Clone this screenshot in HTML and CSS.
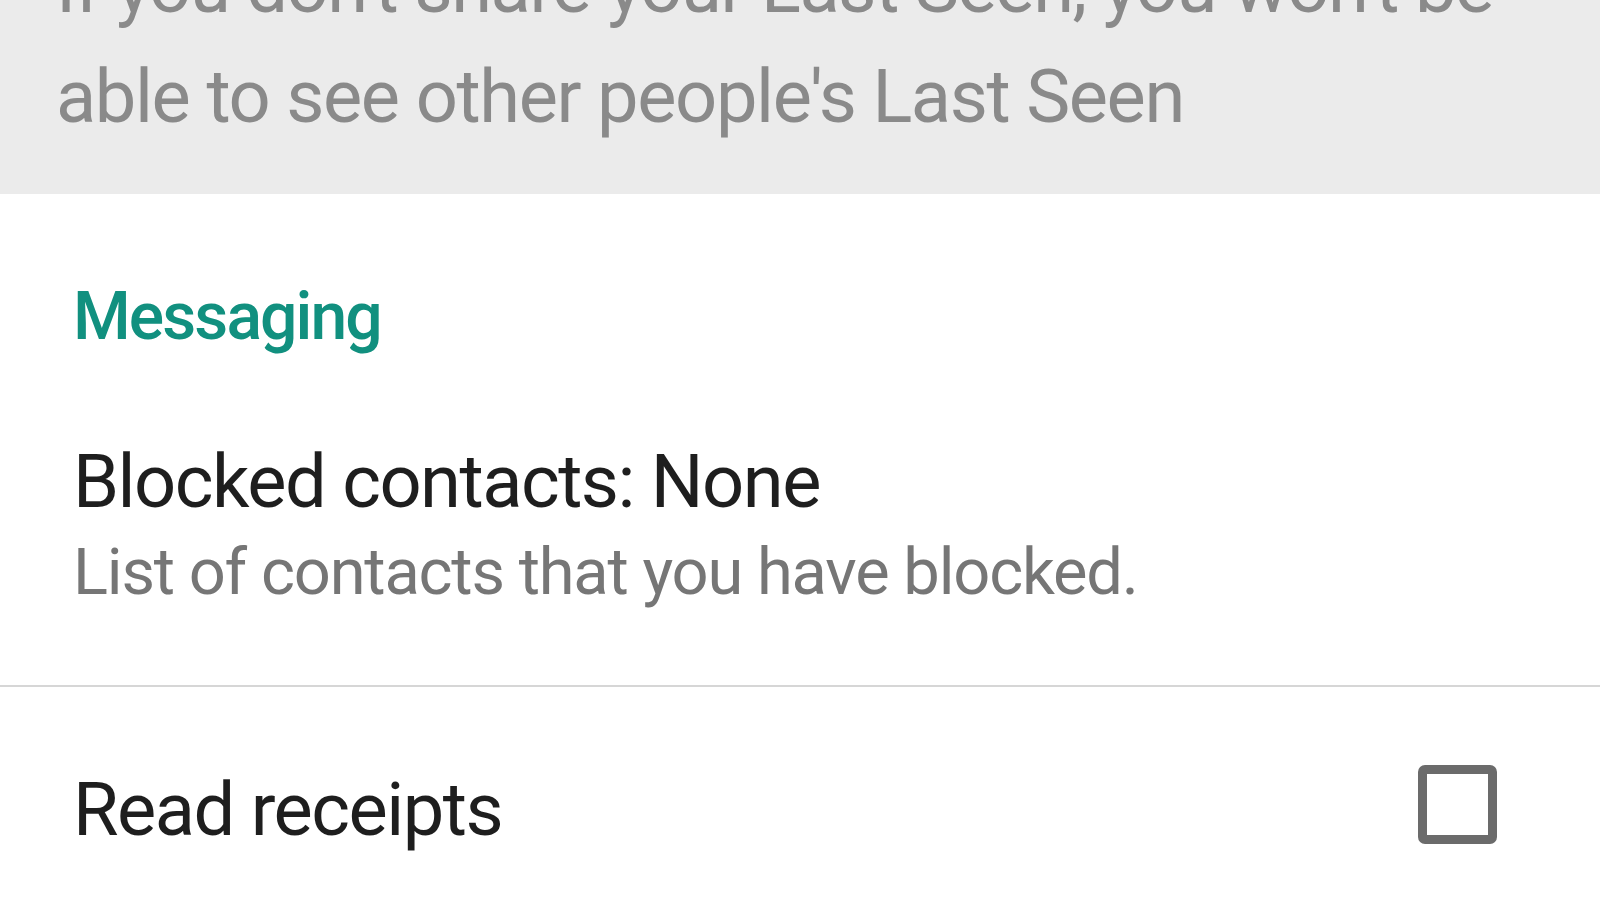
FILE: index.html
```html
<!DOCTYPE html>
<html lang="en">
<head>
<meta charset="utf-8">
<title>Privacy settings</title>
<link rel="stylesheet" href="styles.css">
</head>
<body>
<div class="screen">
  <div class="note">
    <p class="note-text">If you don't share your Last Seen, you won't be<br>able to see other people's Last Seen</p>
  </div>
  <section class="group">
    <h2 class="group-title">Messaging</h2>
    <div class="item item-divided">
      <div class="item-title">Blocked contacts: None</div>
      <div class="item-sub">List of contacts that you have blocked.</div>
    </div>
    <div class="item item-row">
      <div class="item-title">Read receipts</div>
      <span class="checkbox" role="checkbox" aria-checked="false"></span>
    </div>
  </section>
</div>
</body>
</html>
```

FILE: styles.css
```css
html, body {
  margin: 0;
  padding: 0;
  background: #ffffff;
}

body {
  font-family: Roboto, "Noto Sans", "Liberation Sans", sans-serif;
  width: 1600px;
  height: 900px;
  overflow: hidden;
}

.screen {
  display: flex;
  flex-direction: column;
}

.note {
  background: #ebebeb;
  margin-top: -68px;
  padding: 0 0 42px 56px;
}

.note-text {
  margin: 0;
  font-size: 74px;
  line-height: 110px;
  letter-spacing: -1.4px;
  color: #8a8a8a;
  white-space: nowrap;
}

.group {
  display: flex;
  flex-direction: column;
}

.group-title {
  margin: 83px 0 0 73px;
  font-size: 66px;
  line-height: 80px;
  font-weight: 500;
  letter-spacing: -1.9px;
  color: #11907f;
}

.item {
  padding-left: 73px;
}

.item-divided {
  margin-top: 81px;
  padding-bottom: 73px;
  border-bottom: 2px solid #d6d6d6;
}

.item-title {
  font-size: 74px;
  line-height: 88px;
  letter-spacing: -1.5px;
  color: #1e1e1e;
}

.item-sub {
  margin-top: 6px;
  font-size: 65px;
  line-height: 80px;
  letter-spacing: -1.2px;
  color: #767676;
}

.item-row {
  display: flex;
  align-items: flex-start;
  justify-content: space-between;
  padding-top: 79px;
  padding-right: 103px;
}

.checkbox {
  box-sizing: border-box;
  width: 79px;
  height: 79px;
  margin-top: -1px;
  border: 9px solid #6b6b6b;
  border-radius: 7px;
}
```
